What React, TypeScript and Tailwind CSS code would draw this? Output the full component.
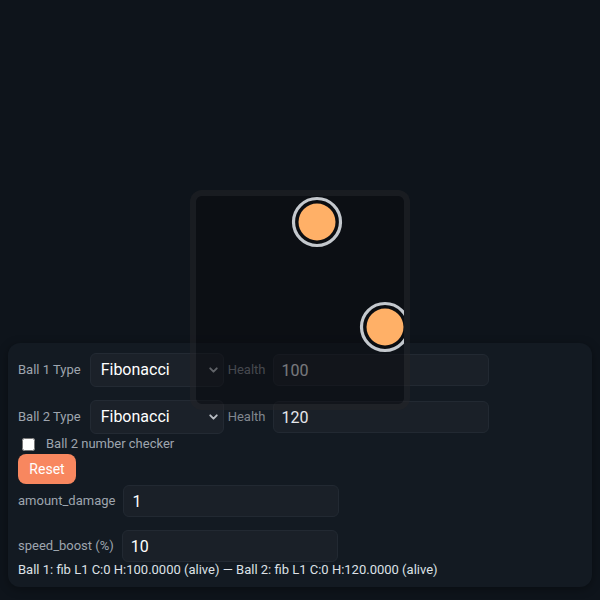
import React, { useState } from 'react';
import { ChevronDown } from 'lucide-react';

const balls = [
  { x: 121, y: 26 },
  { x: 189, y: 131 },
];

const TypeRow: React.FC<{ label: string; health: string }> = ({ label, health }) => (
  <div className="flex items-center h-[34px]">
    <span className="text-[13px] text-[#9ea5ae] mr-[9px]">{label}</span>
    <div className="relative w-[134px] h-[34px]">
      <select
        defaultValue="fib"
        className="appearance-none w-full h-full rounded-md bg-[#1b2129] border border-[#232a33] pl-[10px] pr-6 text-[16px] text-white outline-none"
      >
        <option value="fib">Fibonacci</option>
      </select>
      <ChevronDown
        className="absolute right-[4px] top-1/2 -translate-y-1/2 w-[13px] h-[13px] text-[#b7bcc3] pointer-events-none"
        strokeWidth={3.5}
      />
    </div>
    <span className="text-[13px] text-[#80878f] ml-1 mr-2">Health</span>
    <input
      defaultValue={health}
      className="w-[216px] h-[32px] rounded-md bg-[#1a2028] border border-[#222932] px-[7px] text-[16px] text-[#e5e7eb] outline-none"
    />
  </div>
);

const FieldRow: React.FC<{ label: string; value: string }> = ({ label, value }) => (
  <div className="flex items-center h-[32px]">
    <span className="text-[13px] text-[#9ea5ae] mr-2">{label}</span>
    <input
      defaultValue={value}
      className="w-[216px] h-[32px] rounded-md bg-[#1a2028] border border-[#222932] px-2 text-[16px] text-white outline-none"
    />
  </div>
);

export default function App() {
  const [checked, setChecked] = useState(false);

  return (
    <div className="min-h-screen bg-[#0e141b] flex flex-col justify-end px-2 pb-[13px] font-['Roboto',sans-serif]">
      {/* controls */}
      <div className="rounded-xl bg-[#131a22] px-[10px] pt-[10px] pb-[9px] shadow-[0_2px_10px_rgba(0,0,0,0.35)]">
        <TypeRow label="Ball 1 Type" health="100" />
        <div className="mt-[13px]">
          <TypeRow label="Ball 2 Type" health="120" />
        </div>
        <label className="flex items-center h-[20px]">
          <input
            type="checkbox"
            checked={checked}
            onChange={(e) => setChecked(e.target.checked)}
            className="ml-1 w-[13px] h-[13px] m-0"
          />
          <span className="ml-[11px] text-[13px] text-[#9ea5ae]">Ball 2 number checker</span>
        </label>
        <button className="h-[30px] w-[58px] rounded-lg bg-[#f8875f] text-[14px] text-white">Reset</button>
        <div className="mt-px">
          <FieldRow label="amount_damage" value="1" />
        </div>
        <div className="mt-[13px]">
          <FieldRow label="speed_boost (%)" value="10" />
        </div>
        <div className="text-[13px] leading-[16px] text-[#dde1e6]">
          Ball 1: fib L1 C:0 H:100.0000 (alive) — Ball 2: fib L1 C:0 H:120.0000 (alive)
        </div>
      </div>

      {/* arena overlay */}
      <div className="fixed inset-0 flex items-center justify-center pointer-events-none z-10">
        <div className="w-[220px] h-[220px] rounded-[12px] border-[6px] border-white/[0.06] bg-[#0a0a0d]/50 overflow-hidden">
          <svg width="208" height="208" viewBox="0 0 208 208">
            {balls.map((b, i) => (
              <g key={i}>
                <circle cx={b.x} cy={b.y} r={23.5} fill="#0b0d11" stroke="#c4c8cd" strokeWidth={3.2} />
                <circle cx={b.x} cy={b.y} r={18.5} fill="#ffb067" />
              </g>
            ))}
          </svg>
        </div>
      </div>
    </div>
  );
}
